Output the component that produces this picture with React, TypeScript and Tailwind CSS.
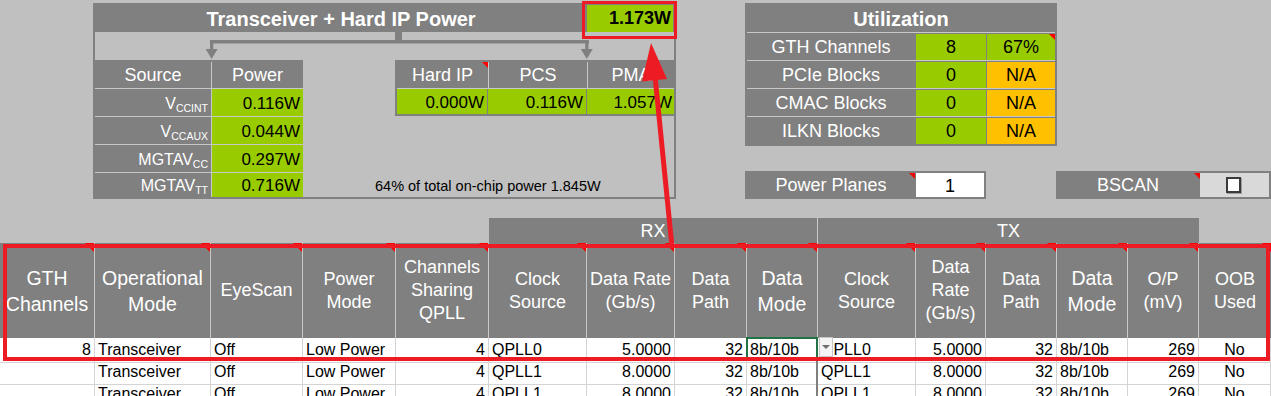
const Tri = ({ big }: { big?: boolean }) => (
  <span className={`absolute top-0 right-0 border-l-transparent border-t-[#ff0000] ${big ? 'border-l-[9px] border-t-[9px]' : 'border-l-[6px] border-t-[6px]'}`} />
)

const sources = [
  { name: 'V', sub: 'CCINT', val: '0.116W' },
  { name: 'V', sub: 'CCAUX', val: '0.044W' },
  { name: 'MGTAV', sub: 'CC', val: '0.297W' },
  { name: 'MGTAV', sub: 'TT', val: '0.716W' },
]

const util = [
  { name: 'GTH Channels', n: '8', pct: '67%', ok: true },
  { name: 'PCIe Blocks', n: '0', pct: 'N/A', ok: false },
  { name: 'CMAC Blocks', n: '0', pct: 'N/A', ok: false },
  { name: 'ILKN Blocks', n: '0', pct: 'N/A', ok: false },
]

type Head = { lines: string[]; big?: boolean }

const heads: Head[] = [
  { lines: ['GTH', 'Channels'], big: true },
  { lines: ['Operational', 'Mode'], big: true },
  { lines: ['EyeScan'] },
  { lines: ['Power', 'Mode'] },
  { lines: ['Channels', 'Sharing', 'QPLL'] },
  { lines: ['Clock', 'Source'] },
  { lines: ['Data Rate', '(Gb/s)'] },
  { lines: ['Data', 'Path'] },
  { lines: ['Data', 'Mode'], big: true },
  { lines: ['Clock', 'Source'] },
  { lines: ['Data', 'Rate', '(Gb/s)'] },
  { lines: ['Data', 'Path'] },
  { lines: ['Data', 'Mode'], big: true },
  { lines: ['O/P', '(mV)'] },
  { lines: ['OOB', 'Used'] },
]

// r = right, l = left, c = center
const align = ['r', 'l', 'l', 'l', 'r', 'l', 'r', 'r', 'l', 'l', 'r', 'r', 'l', 'r', 'c']

const rows = [
  ['8', 'Transceiver', 'Off', 'Low Power', '4', 'QPLL0', '5.0000', '32', '8b/10b', 'QPLL0', '5.0000', '32', '8b/10b', '269', 'No'],
  ['', 'Transceiver', 'Off', 'Low Power', '4', 'QPLL1', '8.0000', '32', '8b/10b', 'QPLL1', '8.0000', '32', '8b/10b', '269', 'No'],
  ['', 'Transceiver', 'Off', 'Low Power', '4', 'QPLL1', '8.0000', '32', '8b/10b', 'QPLL1', '8.0000', '32', '8b/10b', '269', 'No'],
]

const GRID = 'grid grid-cols-[95px_116px_92px_93px_93px_98px_88px_72px_71px_98px_70px_71px_71px_71px_72px]'

const App = () => {
  return (
    <div className="relative w-[1271px] h-[396px] overflow-hidden bg-[#c0c0c0] font-['Liberation_Sans',Arial,sans-serif]">

      {/* top area */}
      <div className="flex h-[218px] pt-[3px]">

        {/* transceiver + hard ip power */}
        <div className="ml-[93px] w-[583px] h-[196px] shrink-0 border-2 border-[#808080] flex flex-col">
          <div className="h-[27px] shrink-0 bg-[#808080] flex">
            <div className="w-[492px] flex items-center justify-center text-white font-bold text-[20px]">Transceiver + Hard IP Power</div>
            <div className="w-[86px] bg-[#99cc00] flex items-center justify-end pr-[2px] font-bold text-[18px] text-black">1.173W</div>
          </div>

          <svg className="block shrink-0 w-[579px] h-[28px]" viewBox="0 0 579 28">
            <rect x="300" y="0" width="7" height="10" fill="#808080" />
            <rect x="115" y="8" width="379" height="3.5" fill="#808080" />
            <rect x="115" y="8" width="3.3" height="10" fill="#808080" />
            <polygon points="110.6,17 122.6,17 116.6,27" fill="#808080" />
            <rect x="490.2" y="8" width="3.3" height="10" fill="#808080" />
            <polygon points="485.8,17 497.8,17 491.8,27" fill="#808080" />
          </svg>

          <div className="flex flex-1 min-h-0">
            {/* source table */}
            <div className="w-[208px] flex flex-col">
              <div className="flex h-[28px] shrink-0 bg-[#808080] text-white text-[18px] pt-[2px]">
                <div className="w-[116px] flex items-center justify-center">Source</div>
                <div className="flex-1 border-l border-[#c8c8c8] flex items-center justify-center">Power</div>
              </div>
              {sources.map((s, i) => (
                <div key={i} className={`flex border-t border-[#c8c8c8] ${i === 3 ? 'flex-1 min-h-0' : 'h-[28px] shrink-0'}`}>
                  <div className="w-[116px] bg-[#808080] text-white text-[16px] flex items-center justify-end pr-[3px] pt-[2px]">
                    <span>{s.name}<span className="text-[10.5px] relative top-[3px]">{s.sub}</span></span>
                  </div>
                  <div className="flex-1 border-l border-[#c8c8c8] bg-[#99cc00] text-[17px] text-black flex items-center justify-end pr-[3px] pt-[2px]">{s.val}</div>
                </div>
              ))}
            </div>

            {/* hard ip table + note */}
            <div className="flex-1 flex flex-col">
              <div className="self-end w-[279px] bg-[#808080] pl-[2px] pb-[2px]">
                <div className="flex h-[28px] text-white text-[18px] pt-[2px]">
                  <div className="relative w-[91px] flex items-center justify-center">Hard IP<Tri /></div>
                  <div className="w-[99px] border-l border-[#c8c8c8] flex items-center justify-center">PCS</div>
                  <div className="flex-1 border-l border-[#c8c8c8] flex items-center justify-center">PMA</div>
                </div>
                <div className="flex gap-px h-[26px] border-t border-[#c8c8c8] text-[17px] text-black">
                  <div className="w-[90px] bg-[#99cc00] flex items-center justify-end pr-[3px] pt-[2px]">0.000W</div>
                  <div className="w-[98px] bg-[#99cc00] flex items-center justify-end pr-[3px] pt-[2px]">0.116W</div>
                  <div className="flex-1 bg-[#99cc00] flex items-center justify-end pr-[2px] pt-[2px]">1.057W</div>
                </div>
              </div>
              <p className="mt-auto pl-[72px] pb-[3px] text-[14.5px] leading-[16px] text-black">64% of total on-chip power 1.845W</p>
            </div>
          </div>
        </div>

        {/* right column */}
        <div className="ml-[69px] flex flex-col shrink-0">
          <div className="w-[312px] bg-[#808080] p-[2px] flex flex-col">
            <div className="h-[27px] flex items-center justify-center text-white font-bold text-[20px]">Utilization</div>
            {util.map((u) => (
              <div key={u.name} className="flex h-[28px] border-t border-[#c8c8c8] text-[18px] pt-px">
                <div className="w-[168px] flex items-center justify-center text-white">{u.name}</div>
                <div className="ml-px w-[70px] bg-[#99cc00] flex items-center justify-center text-black">{u.n}</div>
                <div className={`relative ml-px flex-1 flex items-center justify-center text-black ${u.ok ? 'bg-[#99cc00]' : 'bg-[#ffc000]'}`}>
                  {u.pct}
                  {u.ok && <Tri />}
                </div>
              </div>
            ))}
          </div>

          <div className="flex mt-[25px]">
            <div className="w-[241px] h-[28px] bg-[#808080] p-[2px] flex text-[18px]">
              <div className="relative w-[168px] flex items-center justify-center text-white pt-px">Power Planes<Tri /></div>
              <div className="ml-px flex-1 bg-white flex items-center justify-center text-black pt-[3px]">1</div>
            </div>
            <div className="ml-[70px] w-[215px] h-[28px] bg-[#808080] py-[2px] flex text-[18px]">
              <div className="relative w-[144px] flex items-center justify-center text-white pt-px">BSCAN<Tri /></div>
              <div className="w-[69px] bg-[#d9d9d9] flex items-center justify-center pr-[3px]">
                <div className="w-[15px] h-[16px] bg-white border-2 border-[#3a3a3a] shadow-[1px_1px_0_#9a9a9a]" />
              </div>
            </div>
          </div>
        </div>
      </div>

      {/* channel table */}
      <div className={`${GRID} h-[25px] text-white text-[18px]`}>
        <div className="col-span-5" />
        <div className="col-span-4 bg-[#808080] border-r border-[#c8c8c8] flex items-center justify-center">RX</div>
        <div className="col-span-5 bg-[#808080] flex items-center justify-center">TX</div>
        <div />
      </div>

      <div className={`${GRID} h-[95px] bg-[#808080] text-white`}>
        {heads.map((h, i) => (
          <div key={i} className={`relative flex flex-col items-center justify-center text-center whitespace-nowrap ${i < 14 ? 'border-r border-[#c8c8c8]' : ''} ${h.big ? 'text-[19.5px] leading-[26px]' : 'text-[18px] leading-[23px]'}`}>
            {h.lines.map((l) => <span key={l}>{l}</span>)}
            <Tri big />
          </div>
        ))}
      </div>

      {rows.map((r, ri) => (
        <div key={ri} className={`${GRID} h-[22px] bg-white text-[16px] text-black`}>
          {r.map((c, ci) => (
            <div key={ci} className={`relative flex items-center px-[3px] whitespace-nowrap border-b border-[#d4d4d4] ${ci === 8 ? 'border-r-2 border-r-[#7f7f7f]' : 'border-r border-r-[#d4d4d4]'} ${align[ci] === 'r' ? 'justify-end' : align[ci] === 'c' ? 'justify-center' : 'justify-start'}`}>
              {c}
              {ri === 0 && ci === 8 && (
                <span className="absolute left-[-1px] top-[-1px] w-[72px] h-[24px] border-2 border-[#217346]" />
              )}
              {ri === 0 && ci === 9 && (
                <span className="absolute left-[1px] top-[-1px] w-[14px] h-[20px] bg-[#f4f4f4] border border-[#c6c6c6] flex items-center justify-center">
                  <span className="border-l-[4px] border-r-[4px] border-t-[4px] border-l-transparent border-r-transparent border-t-[#6e6e6e]" />
                </span>
              )}
            </div>
          ))}
        </div>
      ))}

      {/* annotations */}
      <div className="absolute left-[582px] top-[1px] w-[95px] h-[38px] border-[3px] border-[#ed1c24] pointer-events-none" />
      <div className="absolute left-[3px] top-[244px] w-[1267px] h-[117px] border-4 border-[#ed1c24] pointer-events-none" />
      <svg className="absolute left-0 top-0 pointer-events-none" width="1271" height="396" viewBox="0 0 1271 396">
        <line x1="672" y1="247" x2="655" y2="76" stroke="#ed1c24" strokeWidth="5" />
        <polygon points="651,43 667,79 642,81.5" fill="#ed1c24" />
      </svg>
    </div>
  )
}

export default App
